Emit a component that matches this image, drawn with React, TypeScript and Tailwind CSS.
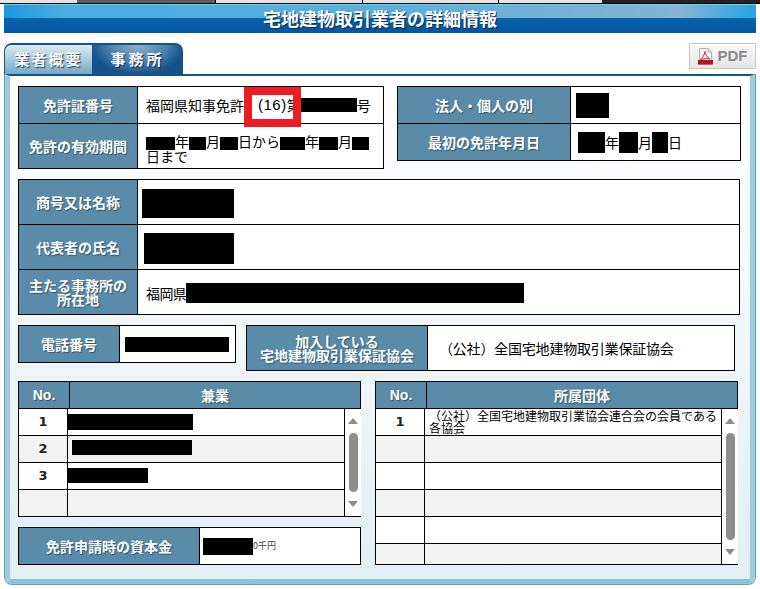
import React from "react";

const FONT = "font-['Noto_Sans_CJK_JP','Noto_Sans',sans-serif]";
const LABEL =
  "flex items-center justify-center bg-[#5a8ba8] text-center font-bold text-white text-[14px] leading-[14px] [text-shadow:1px_1px_1px_#33566b] border-black";

function Bar({ className }: { className: string }) {
  return <span className={`inline-block bg-black align-middle ${className}`} />;
}

function Up() {
  return <div className="h-0 w-0 border-x-[5px] border-b-[6px] border-x-transparent border-b-[#8c8c8c]" />;
}
function Down() {
  return <div className="h-0 w-0 border-x-[5px] border-t-[6px] border-x-transparent border-t-[#8c8c8c]" />;
}

function PdfIcon() {
  return (
    <svg width="15" height="17" viewBox="0 0 15 17">
      <path d="M1.5 0.5H10L13.5 4V16.5H1.5Z" fill="#f7f7f7" stroke="#b5b5b5" />
      <path d="M10 0.5V4H13.5" fill="#dcdcdc" stroke="#b5b5b5" />
      <rect x="0" y="12" width="15" height="4.5" fill="#b3161c" />
      <path d="M7 3.5C7.6 6.5 9 9.5 12 11C9 10.2 5 10.6 2.5 12C4.5 10 6.4 7 7 3.5Z" fill="none" stroke="#c8242b" strokeWidth="1" />
    </svg>
  );
}

function ListRow({ no, alt, last, h, children }: { no?: string; alt?: boolean; last?: boolean; h: string; children?: React.ReactNode }) {
  return (
    <div className={`flex ${h} ${alt ? "bg-[#f2f2f2]" : "bg-white"} ${last ? "" : "border-b border-black"}`}>
      <div className="flex w-[49px] shrink-0 items-center justify-center border-r border-black font-['DejaVu_Sans',sans-serif] text-[13px] font-bold text-[#222]">
        {no}
      </div>
      <div className="relative min-w-0 flex-1">{children}</div>
    </div>
  );
}

export default function App() {
  return (
    <div className={`h-[589px] w-[760px] overflow-hidden bg-white text-[14px] text-black ${FONT}`}>
      {/* window chrome remnant */}
      <div className="flex h-[4px] border-b border-black">
        <div className="w-[77px] bg-[#e4e4e4]" />
        <div className="w-[138px] bg-[#5c5c5c]" />
        <div className="w-[147px] border-l border-black bg-[#e4e4e4]" />
        <div className="w-[136px] border-l border-black bg-[#e4e4e4]" />
        <div className="w-[104px] border-l border-black bg-[#e4e4e4]" />
        <div className="flex-1 bg-[#222]" />
      </div>
      {/* title */}
      <div className="mx-[4px] flex h-[29px] items-center justify-center border-t border-[#6fd0f5] bg-[linear-gradient(90deg,#1e96dc_0%,#4aaee2_8%,#5aaede_50%,#86b4d4_90%,#25a4e6_100%),linear-gradient(#0a6cb8,#04569e)] bg-[length:100%_13px,100%_100%] bg-no-repeat pb-[3px] text-[18px] font-bold leading-none text-white [text-shadow:1px_1px_1px_#0b2f50]">
        宅地建物取引業者の詳細情報
      </div>

      {/* tabs + pdf */}
      <div className="mx-[4px] mt-[10px] flex h-[31px] items-start justify-between">
        <div className="flex h-[31px] w-[179px] rounded-t-[8px] bg-[#15528a] pl-[1px] pt-[2px]">
          <div className="flex h-[29px] w-[87px] items-center justify-center rounded-tl-[6px] bg-[linear-gradient(#dcecf2,#74a9c4)] text-[15px] font-bold tracking-[2px] text-white [text-shadow:1px_1px_1px_#173f5c]">
            業者概要
          </div>
          <div className="flex h-[29px] flex-1 items-center justify-center rounded-tr-[8px] bg-[radial-gradient(ellipse_at_50%_0%,#8fb0cc_0%,#4a80ae_45%,#15528a_72%)] text-[15px] font-bold tracking-[3px] text-white [text-shadow:1px_1px_1px_#0b2f50]">
            事務所
          </div>
        </div>
        <div className="flex h-[26px] w-[67px] items-center justify-center gap-[5px] border border-[#c8c8c8] bg-[linear-gradient(#fafafa,#e6e6e6)] font-['Liberation_Sans',sans-serif] text-[15px] font-bold text-[#8a8a8a]">
          <PdfIcon />
          PDF
        </div>
      </div>

      {/* panel */}
      <div className="mx-[4px] h-[511px] rounded-b-[8px] border-x border-b border-[#5f9fc2] border-t-0">
        <div className="h-full rounded-b-[7px] border-x-[5px] border-b-[5px] border-t-[2px] border-x-[#9fc9dd] border-b-[#8fc0d8] border-t-[#15528a] bg-[linear-gradient(#ffffff,#e2eff3)] pl-[8px] pt-[10px]">
          {/* top row */}
          <div className="flex items-start">
            <div className="relative w-[366px] border border-black bg-white">
              <div className="flex h-[37px] border-b border-black">
                <div className={`${LABEL} w-[119px] shrink-0 border-r`}>免許証番号</div>
                <div className="flex items-center whitespace-nowrap pl-[8px]">
                  福岡県知事免許
                  <span className="ml-[14px] font-['Liberation_Sans',sans-serif] text-[15px] tracking-[0.5px]">(16)</span>第
                  <Bar className="h-[14px] w-[56px]" />号
                </div>
              </div>
              <div className="flex h-[44px]">
                <div className={`${LABEL} w-[119px] shrink-0 border-r`}>免許の有効期間</div>
                <div className="flex-1 pl-[8px] pt-[11px] leading-[13px]">
                  <Bar className="h-[13px] w-[29px]" />年<Bar className="h-[13px] w-[17px]" />月<Bar className="h-[13px] w-[18px]" />日から<Bar className="h-[13px] w-[25px]" />年<Bar className="h-[13px] w-[19px]" />月<Bar className="h-[13px] w-[17px]" />
                  <br />
                  日まで
                </div>
              </div>
              {/* red annotation */}
              <div className="absolute left-[225px] top-0 h-[40px] w-[57px] border-[8px] border-[#ed1c24]" />
            </div>

            <div className="ml-[13px] w-[344px] border border-black bg-white">
              <div className="flex h-[37px] border-b border-black">
                <div className={`${LABEL} w-[173px] border-r`}>法人・個人の別</div>
                <div className="flex items-center pl-[5px]">
                  <Bar className="h-[25px] w-[33px]" />
                </div>
              </div>
              <div className="flex h-[36px]">
                <div className={`${LABEL} w-[173px] border-r`}>最初の免許年月日</div>
                <div className="flex items-center whitespace-nowrap pl-[7px]">
                  <Bar className="h-[21px] w-[27px]" />年<Bar className="h-[21px] w-[19px]" />月<Bar className="h-[21px] w-[16px]" />日
                </div>
              </div>
            </div>
          </div>

          {/* name block */}
          <div className="mt-[10px] w-[722px] border border-black bg-white">
            <div className="flex h-[45px] border-b border-black">
              <div className={`${LABEL} w-[119px] border-r`}>商号又は名称</div>
              <div className="flex items-center pl-[4px] pt-[2px]">
                <Bar className="h-[29px] w-[92px]" />
              </div>
            </div>
            <div className="flex h-[45px] border-b border-black">
              <div className={`${LABEL} w-[119px] border-r`}>代表者の氏名</div>
              <div className="flex items-center pl-[6px] pt-[2px]">
                <Bar className="h-[31px] w-[90px]" />
              </div>
            </div>
            <div className="flex h-[44px]">
              <div className={`${LABEL} w-[119px] border-r`}>
                主たる事務所の
                <br />
                所在地
              </div>
              <div className="flex items-center whitespace-nowrap pl-[8px] pt-[2px] tracking-[-0.6px]">
                福岡県
                <Bar className="h-[20px] w-[338px]" />
              </div>
            </div>
          </div>

          {/* phone & association */}
          <div className="mt-[10px] flex items-start">
            <div className="flex h-[38px] w-[218px] border border-black bg-white">
              <div className={`${LABEL} w-[101px] border-r`}>電話番号</div>
              <div className="flex items-center pl-[5px]">
                <Bar className="h-[15px] w-[104px]" />
              </div>
            </div>
            <div className="ml-[10px] flex h-[46px] w-[489px] border border-black bg-white">
              <div className={`${LABEL} w-[181px] border-r`}>
                加入している
                <br />
                宅地建物取引業保証協会
              </div>
              <div className="flex items-center pl-[11px] tracking-[-0.2px]">（公社）全国宅地建物取引業保証協会</div>
            </div>
          </div>

          {/* lists */}
          <div className="mt-[10px] flex items-start">
            <div className="w-[343px]">
              <div className="flex h-[28px] border border-black">
                <div className={`${LABEL} w-[51px] border-r font-['Liberation_Sans',sans-serif]`}>No.</div>
                <div className={`${LABEL} flex-1`}>兼業</div>
              </div>
              <div className="flex h-[108px] border-b border-l border-black">
                <div className="flex-1 border-r border-black">
                  <ListRow no="1" h="h-[27px]">
                    <Bar className="absolute left-0 top-[5px] h-[16px] w-[125px]" />
                  </ListRow>
                  <ListRow no="2" alt h="h-[27px]">
                    <Bar className="absolute left-[4px] top-[4px] h-[15px] w-[120px]" />
                  </ListRow>
                  <ListRow no="3" h="h-[27px]">
                    <Bar className="absolute left-0 top-[5px] h-[15px] w-[80px]" />
                  </ListRow>
                  <ListRow no="" alt last h="h-[26px]" />
                </div>
                <div className="flex w-[16px] flex-col items-center bg-white pb-[9px] pt-[9px]">
                  <Up />
                  <div className="my-[9px] w-[9px] flex-1 rounded-[5px] bg-[#8e8e8e]" />
                  <Down />
                </div>
              </div>
              <div className="mt-[10px] flex h-[38px] border border-black bg-white">
                <div className={`${LABEL} w-[181px] border-r`}>免許申請時の資本金</div>
                <div className="flex items-center whitespace-nowrap pl-[3px]">
                  <Bar className="h-[17px] w-[50px]" />
                  <span className="text-[9px] text-[#444]">0千円</span>
                </div>
              </div>
            </div>

            <div className="ml-[14px] w-[363px]">
              <div className="flex h-[28px] border border-black">
                <div className={`${LABEL} w-[51px] border-r font-['Liberation_Sans',sans-serif]`}>No.</div>
                <div className={`${LABEL} flex-1`}>所属団体</div>
              </div>
              <div className="flex h-[156px] border-b border-l border-black">
                <div className="flex-1 border-r border-black">
                  <ListRow no="1" h="h-[27px]">
                    <div className="pl-[4px] pt-[1px] text-[12px] leading-[12px]">
                      （公社）全国宅地建物取引業協会連合会の会員である各協会
                    </div>
                  </ListRow>
                  <ListRow alt h="h-[27px]" />
                  <ListRow h="h-[27px]" />
                  <ListRow alt h="h-[27px]" />
                  <ListRow h="h-[27px]" />
                  <ListRow alt last h="h-[20px]" />
                </div>
                <div className="flex w-[16px] flex-col items-center bg-white pb-[9px] pt-[9px]">
                  <Up />
                  <div className="my-[9px] w-[9px] flex-1 rounded-[5px] bg-[#8e8e8e]" />
                  <Down />
                </div>
              </div>
            </div>
          </div>
        </div>
      </div>
    </div>
  );
}
